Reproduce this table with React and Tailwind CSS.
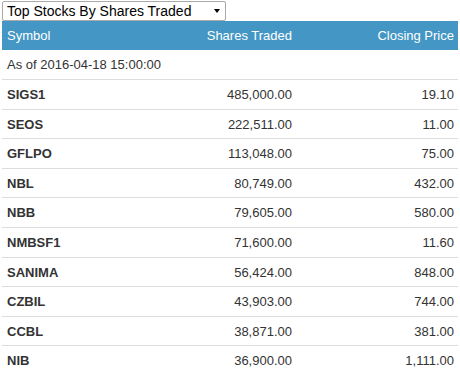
const rows = [
  ['SIGS1', '485,000.00', '19.10'],
  ['SEOS', '222,511.00', '11.00'],
  ['GFLPO', '113,048.00', '75.00'],
  ['NBL', '80,749.00', '432.00'],
  ['NBB', '79,605.00', '580.00'],
  ['NMBSF1', '71,600.00', '11.60'],
  ['SANIMA', '56,424.00', '848.00'],
  ['CZBIL', '43,903.00', '744.00'],
  ['CCBL', '38,871.00', '381.00'],
  ['NIB', '36,900.00', '1,111.00'],
];

export default function App() {
  return (
    <div className="w-[460px] h-[375px] overflow-hidden bg-white text-[#333] font-['Liberation_Sans',Arial,sans-serif]">
      {/* selector */}
      <div className="ml-[2px] mt-[1px] w-[224px] h-[20px] border border-[#a9a9a9] rounded-[2px] flex items-center justify-between pl-[4px] pr-[5px] text-[14px] text-black leading-none">
        <span>Top Stocks By Shares Traded</span>
        <span className="w-0 h-0 border-l-[3.5px] border-r-[3.5px] border-t-[4px] border-l-transparent border-r-transparent border-t-black" />
      </div>

      <div className="ml-[2px] w-[456px] text-[13px]">
        {/* header */}
        <div className="grid grid-cols-[148px_146px_162px] bg-[#4496c4] text-white leading-[18.57px]">
          <div className="pt-[6px] pb-[4px] pl-[5px]">Symbol</div>
          <div className="pt-[6px] pb-[4px] pr-[4px] text-right">Shares Traded</div>
          <div className="pt-[6px] pb-[4px] pr-[4px] text-right">Closing Price</div>
        </div>

        <div className="border-t border-white pt-[5.5px] pb-[4.5px] pl-[5px] leading-[18.57px]">As of 2016-04-18 15:00:00</div>

        {rows.map(([sym, shares, price]) => (
          <div key={sym} className="grid grid-cols-[148px_146px_162px] border-t border-[#ddd] leading-[18.57px]">
            <div className="pt-[6px] pb-[4px] pl-[5px] font-bold">{sym}</div>
            <div className="pt-[6px] pb-[4px] pr-[4px] text-right">{shares}</div>
            <div className="pt-[6px] pb-[4px] pr-[4px] text-right">{price}</div>
          </div>
        ))}
      </div>
    </div>
  );
}
